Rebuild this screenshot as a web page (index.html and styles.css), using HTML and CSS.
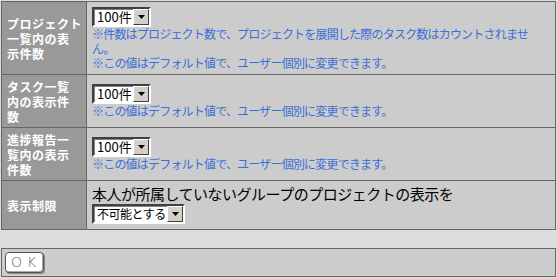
FILE: index.html
```html
<!DOCTYPE html>
<html lang="ja">
 <head>
  <meta charset="UTF-8">
  <title>表示設定</title>
  <meta name="viewport" content="width=device-width, initial-scale=1.0">
  <link rel="stylesheet" href="styles.css">
 </head>
 <body>
  <table class="settings">
   <tr>
    <th>プロジェクト<br>一覧内の表<br>示件数</th>
    <td>
     <span class="sel sel-num">
      <select><option>100件</option><option>50件</option><option>20件</option></select>
      <span class="arrow"><svg width="7" height="4" viewBox="0 0 7 4"><path d="M0 0h7L3.5 4z" fill="#000"/></svg></span>
     </span>
     <p class="note">※件数はプロジェクト数で、プロジェクトを展開した際のタスク数はカウントされません。</p>
     <p class="note">※この値はデフォルト値で、ユーザー個別に変更できます。</p>
    </td>
   </tr>
   <tr>
    <th>タスク一覧<br>内の表示件<br>数</th>
    <td>
     <span class="sel sel-num">
      <select><option>100件</option><option>50件</option><option>20件</option></select>
      <span class="arrow"><svg width="7" height="4" viewBox="0 0 7 4"><path d="M0 0h7L3.5 4z" fill="#000"/></svg></span>
     </span>
     <p class="note">※この値はデフォルト値で、ユーザー個別に変更できます。</p>
    </td>
   </tr>
   <tr>
    <th>進捗報告一<br>覧内の表示<br>件数</th>
    <td>
     <span class="sel sel-num">
      <select><option>100件</option><option>50件</option><option>20件</option></select>
      <span class="arrow"><svg width="7" height="4" viewBox="0 0 7 4"><path d="M0 0h7L3.5 4z" fill="#000"/></svg></span>
     </span>
     <p class="note">※この値はデフォルト値で、ユーザー個別に変更できます。</p>
    </td>
   </tr>
   <tr>
    <th>表示制限</th>
    <td class="limit">
     <p class="lead">本人が所属していないグループのプロジェクトの表示を</p>
     <span class="sel sel-wide">
      <select><option>不可能とする</option><option>可能とする</option></select>
      <span class="arrow"><svg width="7" height="4" viewBox="0 0 7 4"><path d="M0 0h7L3.5 4z" fill="#000"/></svg></span>
     </span>
    </td>
   </tr>
  </table>

  <div class="buttons">
   <button class="ok">OK</button>
  </div>
 </body>
</html>
```
FILE: styles.css
```css
body {
  margin: 0;
  padding: 1px 0 0 1px;
  background: #dddddd;
  font-family: "Noto Sans CJK JP", "DejaVu Sans", sans-serif;
  color: #000;
}
.settings {
  width: 555px;
  border-collapse: collapse;
  border: 1px solid #666;
}
.settings th,
.settings td {
  border: 1px solid #666;
  vertical-align: middle;
}
.settings th {
  width: 78px;
  padding: 4px 1px 3px 5px;
  background: #999999;
  color: #fff;
  font-size: 12px;
  line-height: 15px;
  font-weight: bold;
  letter-spacing: 0.5px;
  text-align: left;
  white-space: nowrap;
}
.settings td {
  padding: 5px 12px 3px 5px;
  background: #cccccc;
}
.settings td.limit {
  padding: 2px 12px 5px 5px;
}
.note {
  margin: 0;
  color: #3a6fd8;
  font-size: 12px;
  line-height: 14.5px;
  letter-spacing: -0.8px;
}
.lead {
  margin: 0;
  font-size: 15px;
  line-height: 21px;
  letter-spacing: -0.5px;
}
.sel {
  position: relative;
  display: block;
  height: 20px;
}
.sel-num { width: 59px; }
.sel-wide { width: 93px; }
.sel select {
  -webkit-appearance: none;
  appearance: none;
  box-sizing: border-box;
  display: block;
  width: 100%;
  height: 20px;
  margin: 0;
  padding: 0 16px 0 3px;
  background: #fff;
  border: 2px solid;
  border-color: #404040 #ffffff #ffffff #404040;
  box-shadow: inset 1px 1px 0 #808080;
  border-radius: 0;
  font-family: "Noto Sans CJK JP", "DejaVu Sans", sans-serif;
  font-size: 12px;
  line-height: 16px;
  letter-spacing: -0.5px;
  color: #000;
}
.sel-num select {
  font-size: 13px;
  letter-spacing: 0;
}
.sel .arrow {
  position: absolute;
  top: 2px;
  right: 2px;
  width: 16px;
  height: 16px;
  box-sizing: border-box;
  background: #d4d0c8;
  border: 1px solid;
  border-color: #fff #404040 #404040 #fff;
  display: flex;
  align-items: center;
  justify-content: center;
  pointer-events: none;
}
.buttons {
  width: 547px;
  margin-top: 18px;
  padding: 3px;
  background: #cccccc;
  border: 1px solid #666;
}
.ok {
  display: block;
  width: 39px;
  height: 21px;
  padding: 0 0 0 5px;
  background: #fff;
  border: 1px solid #555;
  border-radius: 4px;
  box-shadow: inset -1px -1px 0 #aaa, 1px 1px 0 #888;
  font-family: "DejaVu Sans", sans-serif;
  font-size: 14px;
  font-weight: 300;
  letter-spacing: 5px;
  text-align: left;
  color: #666;
  cursor: pointer;
}
```
